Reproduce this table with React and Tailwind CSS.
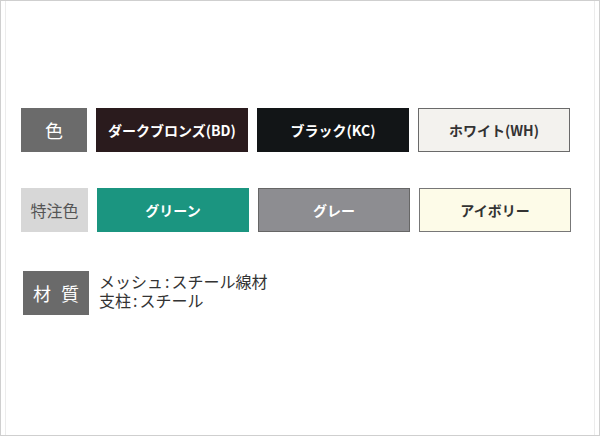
import React from "react";

const font = { fontFamily: '"Noto Sans CJK JP", "Noto Sans", sans-serif' };

const Swatch = ({ name, className }) => (
  <div
    className={`flex h-[44px] w-[152px] items-center justify-center text-[14px] font-bold ${className}`}
  >
    {name}
  </div>
);

export default function App() {
  return (
    <div
      className="relative h-[436px] w-[600px] border border-[#cfcfcf] bg-white"
      style={font}
    >
      {/* faint inner frame */}
      <div className="absolute inset-x-[4px] inset-y-0 border-x border-[#ececec]" />

      <div className="relative flex flex-col pl-[20px] pt-[107px]">
        {/* 標準色 */}
        <div className="flex gap-[9px]">
          <div className="flex h-[44px] w-[66px] items-center justify-center bg-[#6b6b6b] text-[18px] text-white">
            色
          </div>
          <Swatch name="ダークブロンズ(BD)" className="bg-[#2a1b1d] text-white" />
          <Swatch name="ブラック(KC)" className="w-[151px] bg-[#121517] text-white" />
          <Swatch
            name="ホワイト(WH)"
            className="border border-[#6a6a6a] bg-[#f3f2ee] text-[#333]"
          />
        </div>

        {/* 特注色 */}
        <div className="mt-[36px] flex gap-[9px]">
          <div className="flex h-[44px] w-[67px] items-center justify-center bg-[#d7d7d7] text-[16px] text-[#555]">
            特注色
          </div>
          <Swatch name="グリーン" className="w-[151px] bg-[#1b9580] text-white" />
          <Swatch
            name="グレー"
            className="border border-[#666] bg-[#8d8d91] text-white"
          />
          <Swatch
            name="アイボリー"
            className="border border-[#777] bg-[#fdfbe8] text-[#333]"
          />
        </div>

        {/* 材質 */}
        <div className="mt-[39px] flex items-center gap-[10px] pl-[2px]">
          <div className="flex h-[44px] w-[66px] items-center justify-center gap-[10px] bg-[#6a6a6a] text-[18px] text-white">
            <span>材</span>
            <span>質</span>
          </div>
          <div className="-mt-[5px] text-[16px] leading-[19px] text-[#333]">
            <p>メッシュ<span className="px-[2px]">:</span>スチール線材</p>
            <p>支柱<span className="px-[2px]">:</span>スチール</p>
          </div>
        </div>
      </div>
    </div>
  );
}
